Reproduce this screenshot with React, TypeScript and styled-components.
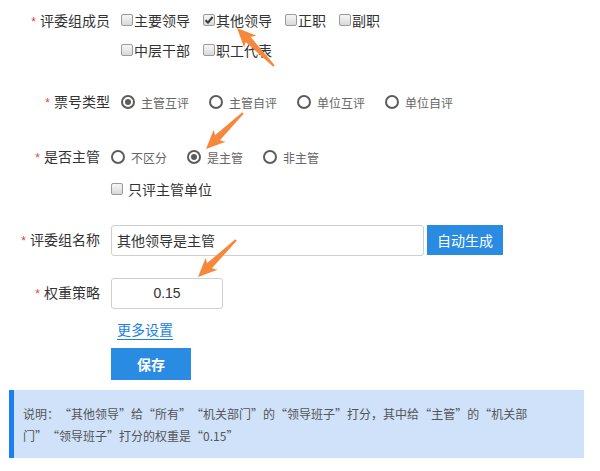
import React from "react";
import styled, { createGlobalStyle } from "styled-components";

const GlobalStyle = createGlobalStyle`
  html, body {
    margin: 0;
    padding: 0;
    background: #fff;
  }
  body {
    font-family: "Noto Sans CJK SC", "Noto Sans", sans-serif;
    color: #333;
  }
`;

const Page = styled.div`
  position: relative;
  width: 600px;
  height: 471px;
  padding-top: 5px;
  box-sizing: border-box;
  overflow: hidden;
`;

const FormItem = styled.div<{ $mt?: number; $align?: string }>`
  display: flex;
  align-items: ${(p) => p.$align || "center"};
  margin-top: ${(p) => p.$mt || 0}px;
`;

const Label = styled.div<{ $width: number }>`
  width: ${(p) => p.$width}px;
  flex: none;
  text-align: right;
  font-size: 14px;
  line-height: 30px;
  color: #333;
  margin-right: 11px;
  white-space: nowrap;
`;

const Star = styled.span`
  color: #e8403a;
  font-size: 12px;
  margin-right: 4px;
  font-family: "Liberation Sans", sans-serif;
`;

const CheckGroup = styled.div`
  display: flex;
  flex-wrap: wrap;
  width: 275px;
`;

const CheckItem = styled.label<{ $gap?: number }>`
  display: flex;
  align-items: center;
  height: 30px;
  margin-right: 13px;
  font-size: 14px;
  color: #333;
  white-space: nowrap;
  gap: ${(p) => p.$gap ?? 1}px;
`;

const Box = styled.span`
  position: relative;
  width: 10px;
  height: 10px;
  flex: none;
  border: 1px solid #9a9a9a;
  border-radius: 2px;
  background: linear-gradient(#f6f6f6, #d9d9d9);
  svg {
    position: absolute;
    left: 0;
    top: 0;
  }
`;

const RadioGroup = styled.div`
  display: flex;
  align-items: center;
  height: 30px;
`;

const RadioItem = styled.label`
  display: flex;
  align-items: center;
  margin-right: 20px;
  font-size: 12px;
  color: #666;
  white-space: nowrap;
`;

const Circle = styled.span<{ $checked?: boolean }>`
  width: 10px;
  height: 10px;
  flex: none;
  border: 2px solid #5c5c5c;
  border-radius: 50%;
  margin-right: 6px;
  display: flex;
  align-items: center;
  justify-content: center;
  &::after {
    content: "";
    display: ${(p) => (p.$checked ? "block" : "none")};
    width: 6px;
    height: 6px;
    border-radius: 50%;
    background: #5c5c5c;
  }
`;

const TextInput = styled.div<{ $width: number; $center?: boolean }>`
  width: ${(p) => p.$width}px;
  height: 31px;
  box-sizing: border-box;
  border: 1px solid #cfcfcf;
  border-radius: 3px;
  padding-left: ${(p) => (p.$center ? 0 : 5)}px;
  display: flex;
  align-items: center;
  justify-content: ${(p) => (p.$center ? "center" : "flex-start")};
  font-size: 14px;
  color: #333;
  font-family: ${(p) =>
    p.$center ? '"Liberation Sans", sans-serif' : '"Noto Sans CJK SC", sans-serif'};
`;

const BlueButton = styled.button<{ $width: number; $height: number; $bold?: boolean }>`
  width: ${(p) => p.$width}px;
  height: ${(p) => p.$height}px;
  border: 0;
  padding: 0;
  background: #2a8be2;
  color: #fff;
  font-size: 14px;
  font-weight: ${(p) => (p.$bold ? 700 : 400)};
  font-family: "Noto Sans CJK SC", sans-serif;
  cursor: pointer;
  flex: none;
`;

const Spacer = styled.div<{ $width: number }>`
  width: ${(p) => p.$width}px;
  flex: none;
`;

const MoreLink = styled.a`
  font-size: 14px;
  line-height: 20px;
  color: #1b7fe6;
  text-decoration: none;
  border-bottom: 1px solid #1b7fe6;
  margin-left: 6px;
`;

const Notice = styled.div`
  margin: 10px 16px 0 9px;
  height: 68px;
  box-sizing: border-box;
  background: #cfe2fa;
  border-left: 5px solid #1d7ff2;
  padding: 13px 0 0 9px;
`;

const NoticeText = styled.p`
  margin: 0;
  width: 510px;
  font-size: 12px;
  line-height: 22px;
  color: #555;
`;

const Quote = styled.span<{ $open?: boolean }>`
  display: inline-block;
  width: 12px;
  text-align: ${(p) => (p.$open ? "right" : "left")};
`;

const Overlay = styled.svg`
  position: absolute;
  left: 0;
  top: 0;
  pointer-events: none;
`;

type Pt = [number, number];

function arrowPoints(tail: Pt, tip: Pt) {
  const dx = tip[0] - tail[0];
  const dy = tip[1] - tail[1];
  const len = Math.hypot(dx, dy);
  const ux = dx / len;
  const uy = dy / len;
  const nx = -uy;
  const ny = ux;
  const headLen = 19;
  const headW = 17;
  const neckW = 7;
  const tailW = 2;
  const nk: Pt = [tip[0] - ux * headLen, tip[1] - uy * headLen];
  const pts: Pt[] = [
    [tail[0] + (nx * tailW) / 2, tail[1] + (ny * tailW) / 2],
    [nk[0] + ux * 3 + (nx * neckW) / 2, nk[1] + uy * 3 + (ny * neckW) / 2],
    [nk[0] + (nx * headW) / 2, nk[1] + (ny * headW) / 2],
    tip,
    [nk[0] - (nx * headW) / 2, nk[1] - (ny * headW) / 2],
    [nk[0] + ux * 3 - (nx * neckW) / 2, nk[1] + uy * 3 - (ny * neckW) / 2],
    [tail[0] - (nx * tailW) / 2, tail[1] - (ny * tailW) / 2],
  ];
  return pts.map((p) => p.join(",")).join(" ");
}

const arrows: [Pt, Pt][] = [
  [[274, 66], [237, 28]],
  [[243, 113], [206, 149]],
  [[236, 240], [198, 277]],
];

// 引号按全角宽度显示
const FullWidthQuotes = ({ text }: { text: string }) => (
  <>
    {text.split(/([“”])/).map((part, i) =>
      part === "“" || part === "”" ? (
        <Quote key={i} $open={part === "“"}>
          {part}
        </Quote>
      ) : (
        part
      )
    )}
  </>
);

const Check = ({ label, checked, gap }: { label: string; checked?: boolean; gap?: number }) => (
  <CheckItem $gap={gap}>
    <Box>
      {checked && (
        <svg width="10" height="10" viewBox="0 0 10 10">
          <path d="M1.5 5.2 L4 7.6 L8.6 2" fill="none" stroke="#333" strokeWidth="2" />
        </svg>
      )}
    </Box>
    {label}
  </CheckItem>
);

const Radio = ({ label, checked }: { label: string; checked?: boolean }) => (
  <RadioItem>
    <Circle $checked={checked} />
    {label}
  </RadioItem>
);

const members = [
  { label: "主要领导" },
  { label: "其他领导", checked: true },
  { label: "正职" },
  { label: "副职" },
  { label: "中层干部" },
  { label: "职工代表" },
];

const App: React.FC = () => {
  return (
    <Page>
      <GlobalStyle />
      <FormItem $align="flex-start">
        <Label $width={110}>
          <Star>*</Star>评委组成员
        </Label>
        <CheckGroup>
          {members.map((m) => (
            <Check key={m.label} label={m.label} checked={m.checked} />
          ))}
        </CheckGroup>
      </FormItem>

      <FormItem $mt={21}>
        <Label $width={110}>
          <Star>*</Star>票号类型
        </Label>
        <RadioGroup>
          <Radio label="主管互评" checked />
          <Radio label="主管自评" />
          <Radio label="单位互评" />
          <Radio label="单位自评" />
        </RadioGroup>
      </FormItem>

      <FormItem $mt={23}>
        <Label $width={100}>
          <Star>*</Star>是否主管
        </Label>
        <RadioGroup>
          <Radio label="不区分" />
          <Radio label="是主管" checked />
          <Radio label="非主管" />
        </RadioGroup>
      </FormItem>

      <FormItem $mt={1}>
        <Spacer $width={111} />
        <Check label="只评主管单位" gap={5} />
      </FormItem>

      <FormItem $mt={20}>
        <Label $width={100}>
          <Star>*</Star>评委组名称
        </Label>
        <TextInput $width={313}>其他领导是主管</TextInput>
        <Spacer $width={3} />
        <BlueButton $width={76} $height={30}>
          自动生成
        </BlueButton>
      </FormItem>

      <FormItem $mt={21}>
        <Label $width={100}>
          <Star>*</Star>权重策略
        </Label>
        <TextInput $width={112} $center>
          0.15
        </TextInput>
      </FormItem>

      <FormItem $mt={10}>
        <Spacer $width={111} />
        <MoreLink href="#">更多设置</MoreLink>
      </FormItem>

      <FormItem $mt={8}>
        <Spacer $width={111} />
        <BlueButton $width={80} $height={32} $bold>
          保存
        </BlueButton>
      </FormItem>

      <Notice>
        <NoticeText>
          <FullWidthQuotes text="说明：“其他领导”给“所有”“机关部门”的“领导班子”打分，其中给“主管”的“机关部门”“领导班子”打分的权重是“0.15”" />
        </NoticeText>
      </Notice>

      <Overlay width="600" height="471" viewBox="0 0 600 471">
        {arrows.map(([tail, tip], i) => (
          <polygon key={i} points={arrowPoints(tail, tip)} fill="#f5883a" />
        ))}
      </Overlay>
    </Page>
  );
};

export default App;
